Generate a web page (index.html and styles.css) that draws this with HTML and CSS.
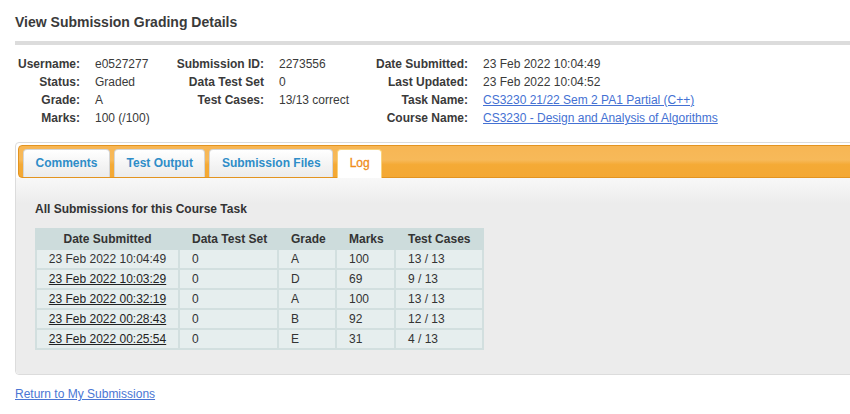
FILE: index.html
```html
<!DOCTYPE html>
<html lang="en">
<head>
<meta charset="utf-8">
<title>View Submission Grading Details</title>
<link rel="stylesheet" href="styles.css">
</head>
<body>
<div class="page">
  <h1 class="title">View Submission Grading Details</h1>
  <div class="rule"></div>

  <div class="info">
    <div class="lbl">Username:</div><div class="val">e0527277</div>
    <div class="lbl">Submission ID:</div><div class="val">2273556</div>
    <div class="lbl">Date Submitted:</div><div class="val">23 Feb 2022 10:04:49</div>

    <div class="lbl">Status:</div><div class="val">Graded</div>
    <div class="lbl">Data Test Set</div><div class="val">0</div>
    <div class="lbl">Last Updated:</div><div class="val">23 Feb 2022 10:04:52</div>

    <div class="lbl">Grade:</div><div class="val">A</div>
    <div class="lbl">Test Cases:</div><div class="val">13/13 correct</div>
    <div class="lbl">Task Name:</div><div class="val"><a class="link" href="#">CS3230 21/22 Sem 2 PA1 Partial (C++)</a></div>

    <div class="lbl">Marks:</div><div class="val">100 (/100)</div>
    <div class="lbl"></div><div class="val"></div>
    <div class="lbl">Course Name:</div><div class="val"><a class="link" href="#">CS3230 - Design and Analysis of Algorithms</a></div>
  </div>

  <div class="panel">
    <div class="tabbar">
      <a class="tab" href="#">Comments</a>
      <a class="tab" href="#">Test Output</a>
      <a class="tab" href="#">Submission Files</a>
      <a class="tab active" href="#">Log</a>
    </div>
    <div class="content">
      <h2 class="subhead">All Submissions for this Course Task</h2>
      <table class="subs">
        <thead>
          <tr>
            <th class="c1">Date Submitted</th>
            <th class="c2">Data Test Set</th>
            <th class="c3">Grade</th>
            <th class="c4">Marks</th>
            <th class="c5">Test Cases</th>
          </tr>
        </thead>
        <tbody>
          <tr><td class="c1">23 Feb 2022 10:04:49</td><td>0</td><td>A</td><td>100</td><td>13 / 13</td></tr>
          <tr><td class="c1"><a href="#">23 Feb 2022 10:03:29</a></td><td>0</td><td>D</td><td>69</td><td>9 / 13</td></tr>
          <tr><td class="c1"><a href="#">23 Feb 2022 00:32:19</a></td><td>0</td><td>A</td><td>100</td><td>13 / 13</td></tr>
          <tr><td class="c1"><a href="#">23 Feb 2022 00:28:43</a></td><td>0</td><td>B</td><td>92</td><td>12 / 13</td></tr>
          <tr><td class="c1"><a href="#">23 Feb 2022 00:25:54</a></td><td>0</td><td>E</td><td>31</td><td>4 / 13</td></tr>
        </tbody>
      </table>
    </div>
  </div>

  <a class="back" href="#">Return to My Submissions</a>
</div>
</body>
</html>
```

FILE: styles.css
```css
html, body {
  margin: 0;
  padding: 0;
  background: #fff;
  overflow: hidden;
}

body {
  font-family: "Liberation Sans", Arial, sans-serif;
  font-size: 12px;
  color: #333;
}

.page {
  padding: 14px 0 0 15px;
  overflow: hidden;
}

.title {
  margin: 0;
  font-size: 14px;
  line-height: 16px;
  font-weight: bold;
  color: #3a3a3a;
}

.rule {
  margin-top: 11px;
  height: 4px;
  background: #dcdcdc;
}

.info {
  margin-top: 10px;
  display: grid;
  grid-template-columns: 65px 85px 99px 106px 98px auto;
  line-height: 18px;
}

.lbl {
  font-weight: bold;
  text-align: right;
  color: #3a3a3a;
}

.val {
  padding-left: 15px;
  white-space: nowrap;
  color: #3a3a3a;
}

.link {
  color: #4471d3;
  text-decoration: underline;
}

.panel {
  margin-top: 15px;
  margin-right: -10px;
  border: 1px solid #dcdcdc;
  border-radius: 4px;
  background: #fff;
}

.tabbar {
  margin: 2px 2px 0 2px;
  padding: 3px 4px 0 4px;
  height: 28px;
  display: flex;
  gap: 4px;
  border: 1px solid #e39420;
  border-radius: 4px;
  background: linear-gradient(to bottom, #f7b654 0%, #f7b959 45%, #f4aa36 60%, #f4a833 100%);
}

.tab {
  display: block;
  height: 27px;
  line-height: 27px;
  padding: 0 11.5px;
  border: 1px solid #d5d5d5;
  border-bottom: none;
  border-radius: 4px 4px 0 0;
  background: linear-gradient(to bottom, #ffffff 0%, #f3f3f3 60%, #ececec 100%);
  color: #2e8dc8;
  font-weight: bold;
  text-decoration: none;
  margin-bottom: -1px;
  position: relative;
}

.tab.active {
  background: #fff;
  border-color: #f9d27c;
  color: #ef8d1a;
  height: 28px;
  font-weight: normal;
  -webkit-text-stroke: 0.3px #ef8d1a;
}

.content {
  padding: 23px 0 24px 19px;
  background: linear-gradient(to bottom, #f8f8f8 0px, #ececec 26px, #ececec 100%);
  border-radius: 0 0 4px 4px;
}

.subhead {
  margin: 0 0 11px 0;
  font-size: 12px;
  line-height: 16px;
  font-weight: bold;
  color: #333;
}

.subs {
  border-collapse: collapse;
  table-layout: fixed;
  width: 447px;
  font-size: 12px;
  color: #333;
}

.subs th,
.subs td {
  box-sizing: border-box;
  height: 20px;
  padding: 0 0 0 12px;
  border: 2px solid #d2dfdf;
  text-align: left;
  white-space: nowrap;
}

.subs thead th {
  border-color: #cddcdc;
}

.subs th {
  background: #cddcdc;
  font-weight: bold;
  color: #333;
}

.subs td {
  background: #e6eeee;
  color: #333;
}

.subs .c1 {
  text-align: center;
  padding: 0;
}

.subs th.c1 { width: 143px; }
.subs th.c2 { width: 99px; }
.subs th.c3 { width: 58px; }
.subs th.c4 { width: 59px; }
.subs th.c5 { width: 88px; }

.subs a {
  color: #222;
  text-decoration: underline;
}

.back {
  display: inline-block;
  margin-top: 11px;
  line-height: 16px;
  color: #4a76d4;
  text-decoration: underline;
}
```
